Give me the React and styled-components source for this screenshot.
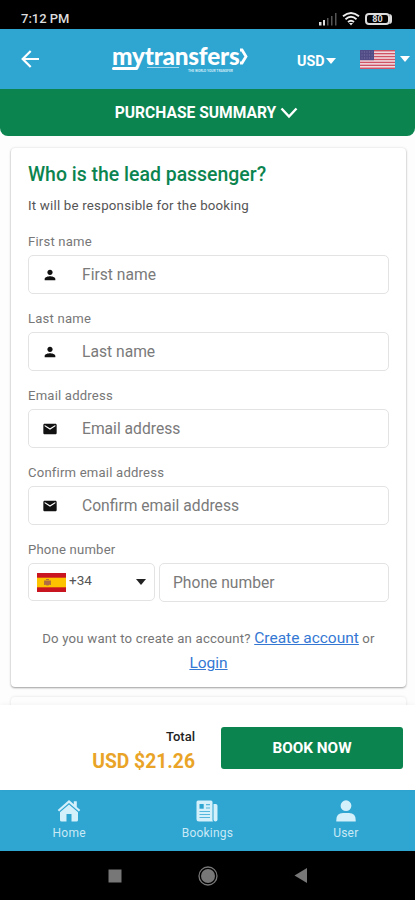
import { useState } from "react";
import styled, { createGlobalStyle } from "styled-components";

const theme = {
  blue: "#2fa5d1",
  green: "#0b844f",
  orange: "#e9a427",
  font: 'Roboto, "Liberation Sans", sans-serif',
};

const PersonIcon = () => (
  <svg width="16" height="16" viewBox="0 0 24 24" fill="#111">
    <path d="M12 12c2.2 0 4-1.8 4-4s-1.8-4-4-4-4 1.800-4 4 1.800 4 4 4zm0 2c-2.700 0-8 1.300-8 4v2h16v-2c0-2.700-5.300-4-8-4z" />
  </svg>
);

const MailIcon = () => (
  <svg width="16" height="16" viewBox="0 0 24 24" fill="#111">
    <path d="M20 4H4c-1.100 0-2 .9-2 2v12c0 1.100.9 2 2 2h16c1.100 0 2-.9 2-2V6c0-1.100-.9-2-2-2zm0 4-8 5-8-5V6l8 5 8-5v2z" />
  </svg>
);

const fields = [
  { name: "firstName", label: "First name", icon: <PersonIcon /> },
  { name: "lastName", label: "Last name", icon: <PersonIcon /> },
  { name: "email", label: "Email address", icon: <MailIcon /> },
  { name: "confirmEmail", label: "Confirm email address", icon: <MailIcon /> },
];

const SignalIcon = () => (
  <svg width="18" height="13" viewBox="0 0 18 13">
    <path d="M0 9h2.500v3.500H0zM4 7h2v5.500H4z" fill="#ddd" />
    <path d="M8 5h1.500v7.500H8zM12 3h1.500v9.500H12zM16 0h1.500v12.500H16z" fill="#555" />
  </svg>
);

const WifiIcon = () => (
  <svg width="18" height="14" viewBox="0 0 18 14" fill="none" stroke="#eee" strokeWidth="1.900">
    <path d="M1 4.300Q9-2.300 17 4.300M3.500 7.200Q9 2.500 14.500 7.200M6 10Q9 7.500 12 10" />
    <path d="M7 11h4l-2 2.500z" fill="#eee" stroke="none" />
  </svg>
);

const UsFlag = () => (
  <svg width="35" height="19" viewBox="0 0 35 19">
    <rect width="35" height="19" fill="#f3e7ea" />
    {[0, 1, 2, 3, 4, 5, 6].map((i) => (
      <rect key={i} y={i * 2.92} width="35" height="1.460" fill="#cf5265" />
    ))}
    <rect width="14" height="10.200" fill="#514c86" />
    {[2, 5, 8].map((y) => (
      <path key={y} d={`M1.500 ${y}h11`} stroke="#8581ae" strokeWidth=".8" strokeDasharray="1 1.500" />
    ))}
  </svg>
);

const SpainFlag = () => (
  <svg width="29" height="19" viewBox="0 0 29 19">
    <rect width="29" height="19" fill="#c8151f" />
    <rect y="4.700" width="29" height="9.600" fill="#fdc300" />
    <path d="M8 7.500h5v4q-2.500 2-5 0z" fill="#b06a45" />
    <path d="M7.500 7.500v4.500M13.500 7.500v4.500M9 6.500h3" stroke="#b3743a" />
  </svg>
);

const HomeIcon = () => (
  <svg width="24" height="22" viewBox="0 0 24 22" fill="#d3f0fb">
    <path d="M12 0 .7 10l1.400 1.500L12 3l9.900 8.500 1.400-1.500-3.500-3.100V1.300h-3v3z" />
    <path d="m12 4.500-9 7.800V20q0 1.500 1.500 1.500h5V14h5v7.500h5q1.500 0 1.500-1.500v-7.700z" />
  </svg>
);

const BookingsIcon = () => (
  <svg width="22" height="22" viewBox="0 0 22 22">
    <path d="M2 .5h13q1.500 0 1.500 1.500v18q0 1 .8 1.500H3Q.5 21.500.5 19V2Q.5.500 2 .5z" fill="#d3f0fb" />
    <path d="M17.500 4h2.300q1.700 0 1.700 1.700v13.600q0 2.200-2 2.200-2 0-2-2z" fill="#d3f0fb" />
    <path d="M3.500 4h4.200v4.700H3.500z" fill="#2fa5d1" />
    <path d="M10 4.600h4M10 8h4M3.500 11.500H14M3.500 14.500H14M3.500 17.500H14" stroke="#55b7dc" strokeWidth="1.200" />
  </svg>
);

const UserIcon = () => (
  <svg width="20" height="22" viewBox="0 0 20 22" fill="#d3f0fb">
    <circle cx="10" cy="5.700" r="5.400" />
    <path d="M.3 21.500v-1.500Q.3 13 7 13h6q6.700 0 6.700 7v1.500z" />
  </svg>
);

export default function App() {
  const [form, setForm] = useState({});

  const handleChange = (e) => {
    setForm({ ...form, [e.target.name]: e.target.value });
  };

  return (
    <Screen>
      <GlobalStyle />
      <StatusBar>
        <span>7:12 PM</span>
        <StatusIcons>
          <SignalIcon />
          <WifiIcon />
          <Battery>80</Battery>
        </StatusIcons>
      </StatusBar>

      <Header>
        <BackButton aria-label="Back">
          <svg width="18" height="18" viewBox="0 0 18 18" fill="none" stroke="#fff" strokeWidth="2.200">
            <path d="M18 9H2M9.700 1 1.700 9l8 8" />
          </svg>
        </BackButton>
        <Logo>
          <LogoName>
            <span>mytransfers</span>
            <svg width="9" height="18" viewBox="0 0 9 18" fill="none" stroke="#fff" strokeWidth="2.800">
              <path d="M1 3h2l4 6.500L3 16H1" />
            </svg>
          </LogoName>
          <LogoLines>
            <LogoBar />
            <LogoThin />
            <Tagline>THE WORLD YOUR TRANSFER</Tagline>
          </LogoLines>
        </Logo>
        <Currency>
          USD
          <Caret $color="#fff" />
        </Currency>
        <Language>
          <UsFlag />
          <Caret $color="#fff" />
        </Language>
      </Header>

      <Summary>
        PURCHASE SUMMARY
        <svg width="18" height="12" viewBox="0 0 18 12" fill="none" stroke="#fff" strokeWidth="2.400">
          <path d="m1.500 1.500 7.500 8 7.500-8" />
        </svg>
      </Summary>

      <Content>
        <Card>
          <Title>Who is the lead passenger?</Title>
          <Subtitle>It will be responsible for the booking</Subtitle>
          {fields.map((field) => (
            <Field key={field.name}>
              <Label>{field.label}</Label>
              <InputBox>
                <InputIcon>{field.icon}</InputIcon>
                <Input
                  name={field.name}
                  placeholder={field.label}
                  value={form[field.name] || ""}
                  onChange={handleChange}
                />
              </InputBox>
            </Field>
          ))}
          <Field>
            <Label>Phone number</Label>
            <PhoneRow>
              <Prefix>
                <SpainFlag />
                <PrefixCode>+34</PrefixCode>
                <Caret $color="#222" />
              </Prefix>
              <PhoneBox>
                <Input
                  name="phone"
                  placeholder="Phone number"
                  value={form.phone || ""}
                  onChange={handleChange}
                />
              </PhoneBox>
            </PhoneRow>
          </Field>
          <Account>
            Do you want to create an account? <Link href="#">Create account</Link> or <Link href="#">Login</Link>
          </Account>
        </Card>
        <NextCard />
      </Content>

      <Checkout>
        <Total>
          <TotalLabel>Total</TotalLabel>
          <Price>USD $21.26</Price>
        </Total>
        <BookButton>BOOK NOW</BookButton>
      </Checkout>

      <TabBar>
        <Tab>
          <HomeIcon />
          Home
        </Tab>
        <Tab>
          <BookingsIcon />
          Bookings
        </Tab>
        <Tab>
          <UserIcon />
          User
        </Tab>
      </TabBar>

      <SystemBar>
        <svg width="14" height="14" viewBox="0 0 14 14">
          <path d="M.5.500h13v13H.5z" fill="#777" />
        </svg>
        <svg width="20" height="20" viewBox="0 0 20 20">
          <circle cx="10" cy="10" r="9" fill="none" stroke="#777" strokeWidth="1.300" />
          <circle cx="10" cy="10" r="7" fill="#777" />
        </svg>
        <svg width="14" height="15" viewBox="0 0 14 15">
          <path d="M13 0v15L.5 7.500z" fill="#777" />
        </svg>
      </SystemBar>
    </Screen>
  );
}

const GlobalStyle = createGlobalStyle`
  * {
    box-sizing: border-box;
  }
  body {
    margin: 0;
    background: #fff;
  }
  svg {
    display: block;
    flex-shrink: 0;
  }
`;

const Screen = styled.div`
  display: flex;
  flex-direction: column;
  width: 415px;
  height: 900px;
  overflow: hidden;
  background: #fdfdfd;
  font-family: ${theme.font};
`;

const StatusBar = styled.div`
  display: flex;
  justify-content: space-between;
  height: 29px;
  padding: 9px 22px 0 21px;
  background: #000;
  color: #ddd;
  font-size: 13px;
  font-weight: 500;
  line-height: 20px;
`;

const StatusIcons = styled.div`
  display: flex;
  align-items: center;
  gap: 5px;
`;

const Battery = styled.div`
  display: flex;
  align-items: center;
  justify-content: center;
  width: 25px;
  height: 12px;
  margin-right: 3px;
  border: 2px solid #ddd;
  border-radius: 4px;
  font-size: 9px;
  font-weight: 700;
  line-height: 9px;
  box-shadow: 3px 0 0 -1px #ddd;
`;

const Header = styled.header`
  display: flex;
  align-items: center;
  height: 60px;
  padding-left: 21px;
  background: ${theme.blue};
  color: #fff;
`;

const BackButton = styled.button`
  width: 18px;
  padding: 0;
  border: none;
  background: none;
`;

const Logo = styled.div`
  width: 137px;
  height: 32px;
  margin-left: 73px;
`;

const LogoName = styled.div`
  display: flex;
  align-items: center;
  height: 23px;
  padding-top: 2px;
  font-family: Lato, sans-serif;
  font-size: 24.3px;
  font-weight: 900;
  line-height: 22px;

  span {
    width: 127px;
    letter-spacing: -0.2px;
  }
`;

const LogoLines = styled.div`
  display: flex;
  gap: 9px;
  padding-top: 1px;
`;

const LogoBar = styled.div`
  width: 26px;
  height: 3px;
  border-radius: 2px;
  background: #fff;
`;

const LogoThin = styled.div`
  width: 32px;
  height: 1px;
  background: #a5d7ec;
`;

const Tagline = styled.span`
  padding-top: 2px;
  color: #cdeaf6;
  font-size: 3.3px;
  font-weight: 700;
  line-height: 5px;
  white-space: nowrap;
`;

const Caret = styled.span`
  border: 5px solid transparent;
  border-top: 6px solid ${(props) => props.$color};
  border-bottom: none;
`;

const Currency = styled.div`
  display: flex;
  align-items: center;
  gap: 1px;
  margin-left: 48px;
  padding-top: 3px;
  font-size: 14.3px;
  font-weight: 700;
`;

const Language = styled.div`
  display: flex;
  align-items: center;
  gap: 5px;
  margin-left: 24px;
`;

const Summary = styled.div`
  display: flex;
  align-items: center;
  justify-content: center;
  gap: 4px;
  height: 47px;
  padding-right: 2px;
  border-radius: 0 0 8px 8px;
  background: ${theme.green};
  color: #fff;
  font-size: 15.6px;
  font-weight: 700;
`;

const Content = styled.main`
  flex: 1;
  padding: 12px 9px 0 11px;
  overflow: hidden;
`;

const Card = styled.section`
  height: 539px;
  padding: 14px 17px 0;
  border-radius: 4px;
  background: #fff;
  box-shadow: 0 1px 2px rgba(0, 0, 0, 0.34), 0 0 3px rgba(0, 0, 0, 0.1);
`;

const NextCard = styled.div`
  height: 60px;
  margin-top: 10px;
  border-radius: 4px;
  background: #fdfdfd;
  box-shadow: 0 0 3px rgba(0, 0, 0, 0.12);
`;

const Title = styled.h1`
  margin: 0;
  color: ${theme.green};
  font-size: 19.45px;
  font-weight: 500;
  line-height: 26px;
`;

const Subtitle = styled.p`
  margin: 8px 0 18px;
  color: #555;
  font-size: 13.3px;
  letter-spacing: 0.2px;
  line-height: 20px;
`;

const Field = styled.div`
  height: 77px;
`;

const Label = styled.label`
  display: block;
  height: 21px;
  color: #777;
  font-size: 13.1px;
  letter-spacing: 0.2px;
  line-height: 16px;
`;

const InputBox = styled.div`
  display: flex;
  align-items: center;
  height: 39px;
  border: 1px solid #e3e3e3;
  border-radius: 5px;
  background: #fff;
`;

const InputIcon = styled.span`
  display: flex;
  justify-content: center;
  width: 41px;
  margin-right: 12px;
`;

const Input = styled.input`
  flex: 1;
  min-width: 0;
  padding: 0;
  border: none;
  outline: none;
  background: none;
  color: #444;
  font-family: ${theme.font};
  font-size: 15.65px;

  &::placeholder {
    color: #7a7a7a;
  }
`;

const PhoneRow = styled.div`
  display: flex;
  gap: 4px;
`;

const Prefix = styled(InputBox)`
  width: 127px;
  height: 38px;
  padding: 0 8px;
`;

const PrefixCode = styled.span`
  flex: 1;
  padding: 0 0 4px 3px;
  color: #555;
  font-size: 13.6px;
`;

const PhoneBox = styled(InputBox)`
  flex: 1;
  padding-left: 13px;
`;

const Account = styled.p`
  margin: 7px 0 0;
  color: #757575;
  font-size: 13.2px;
  letter-spacing: 0.2px;
  line-height: 24px;
  text-align: center;
`;

const Link = styled.a`
  color: #3478d4;
  font-size: 15.5px;
  letter-spacing: 0;
`;

const Checkout = styled.div`
  position: relative;
  display: flex;
  align-items: center;
  justify-content: flex-end;
  gap: 26px;
  height: 85px;
  padding-right: 12px;
  background: #fff;
  box-shadow: 0 -1px 4px rgba(0, 0, 0, 0.04);
`;

const Total = styled.div`
  display: flex;
  flex-direction: column;
  align-items: flex-end;
  padding-top: 8px;
`;

const TotalLabel = styled.span`
  color: #222;
  font-size: 13px;
  font-weight: 500;
  line-height: 20px;
`;

const Price = styled.strong`
  color: ${theme.orange};
  font-size: 19.3px;
  font-weight: 700;
  line-height: 29px;
`;

const BookButton = styled.button`
  width: 182px;
  height: 42px;
  padding: 0;
  border: none;
  border-radius: 3px;
  background: ${theme.green};
  color: #fff;
  font-family: ${theme.font};
  font-size: 15.3px;
  font-weight: 700;
`;

const TabBar = styled.nav`
  display: flex;
  height: 61px;
  background: ${theme.blue};
`;

const Tab = styled.div`
  display: flex;
  flex: 1;
  flex-direction: column;
  align-items: center;
  gap: 4px;
  padding-top: 10px;
  color: #c9e9f6;
  font-size: 12px;
  letter-spacing: 0.2px;
  line-height: 14px;
`;

const SystemBar = styled.div`
  display: flex;
  align-items: center;
  justify-content: center;
  gap: 76px;
  height: 49px;
  background: #000;
`;
